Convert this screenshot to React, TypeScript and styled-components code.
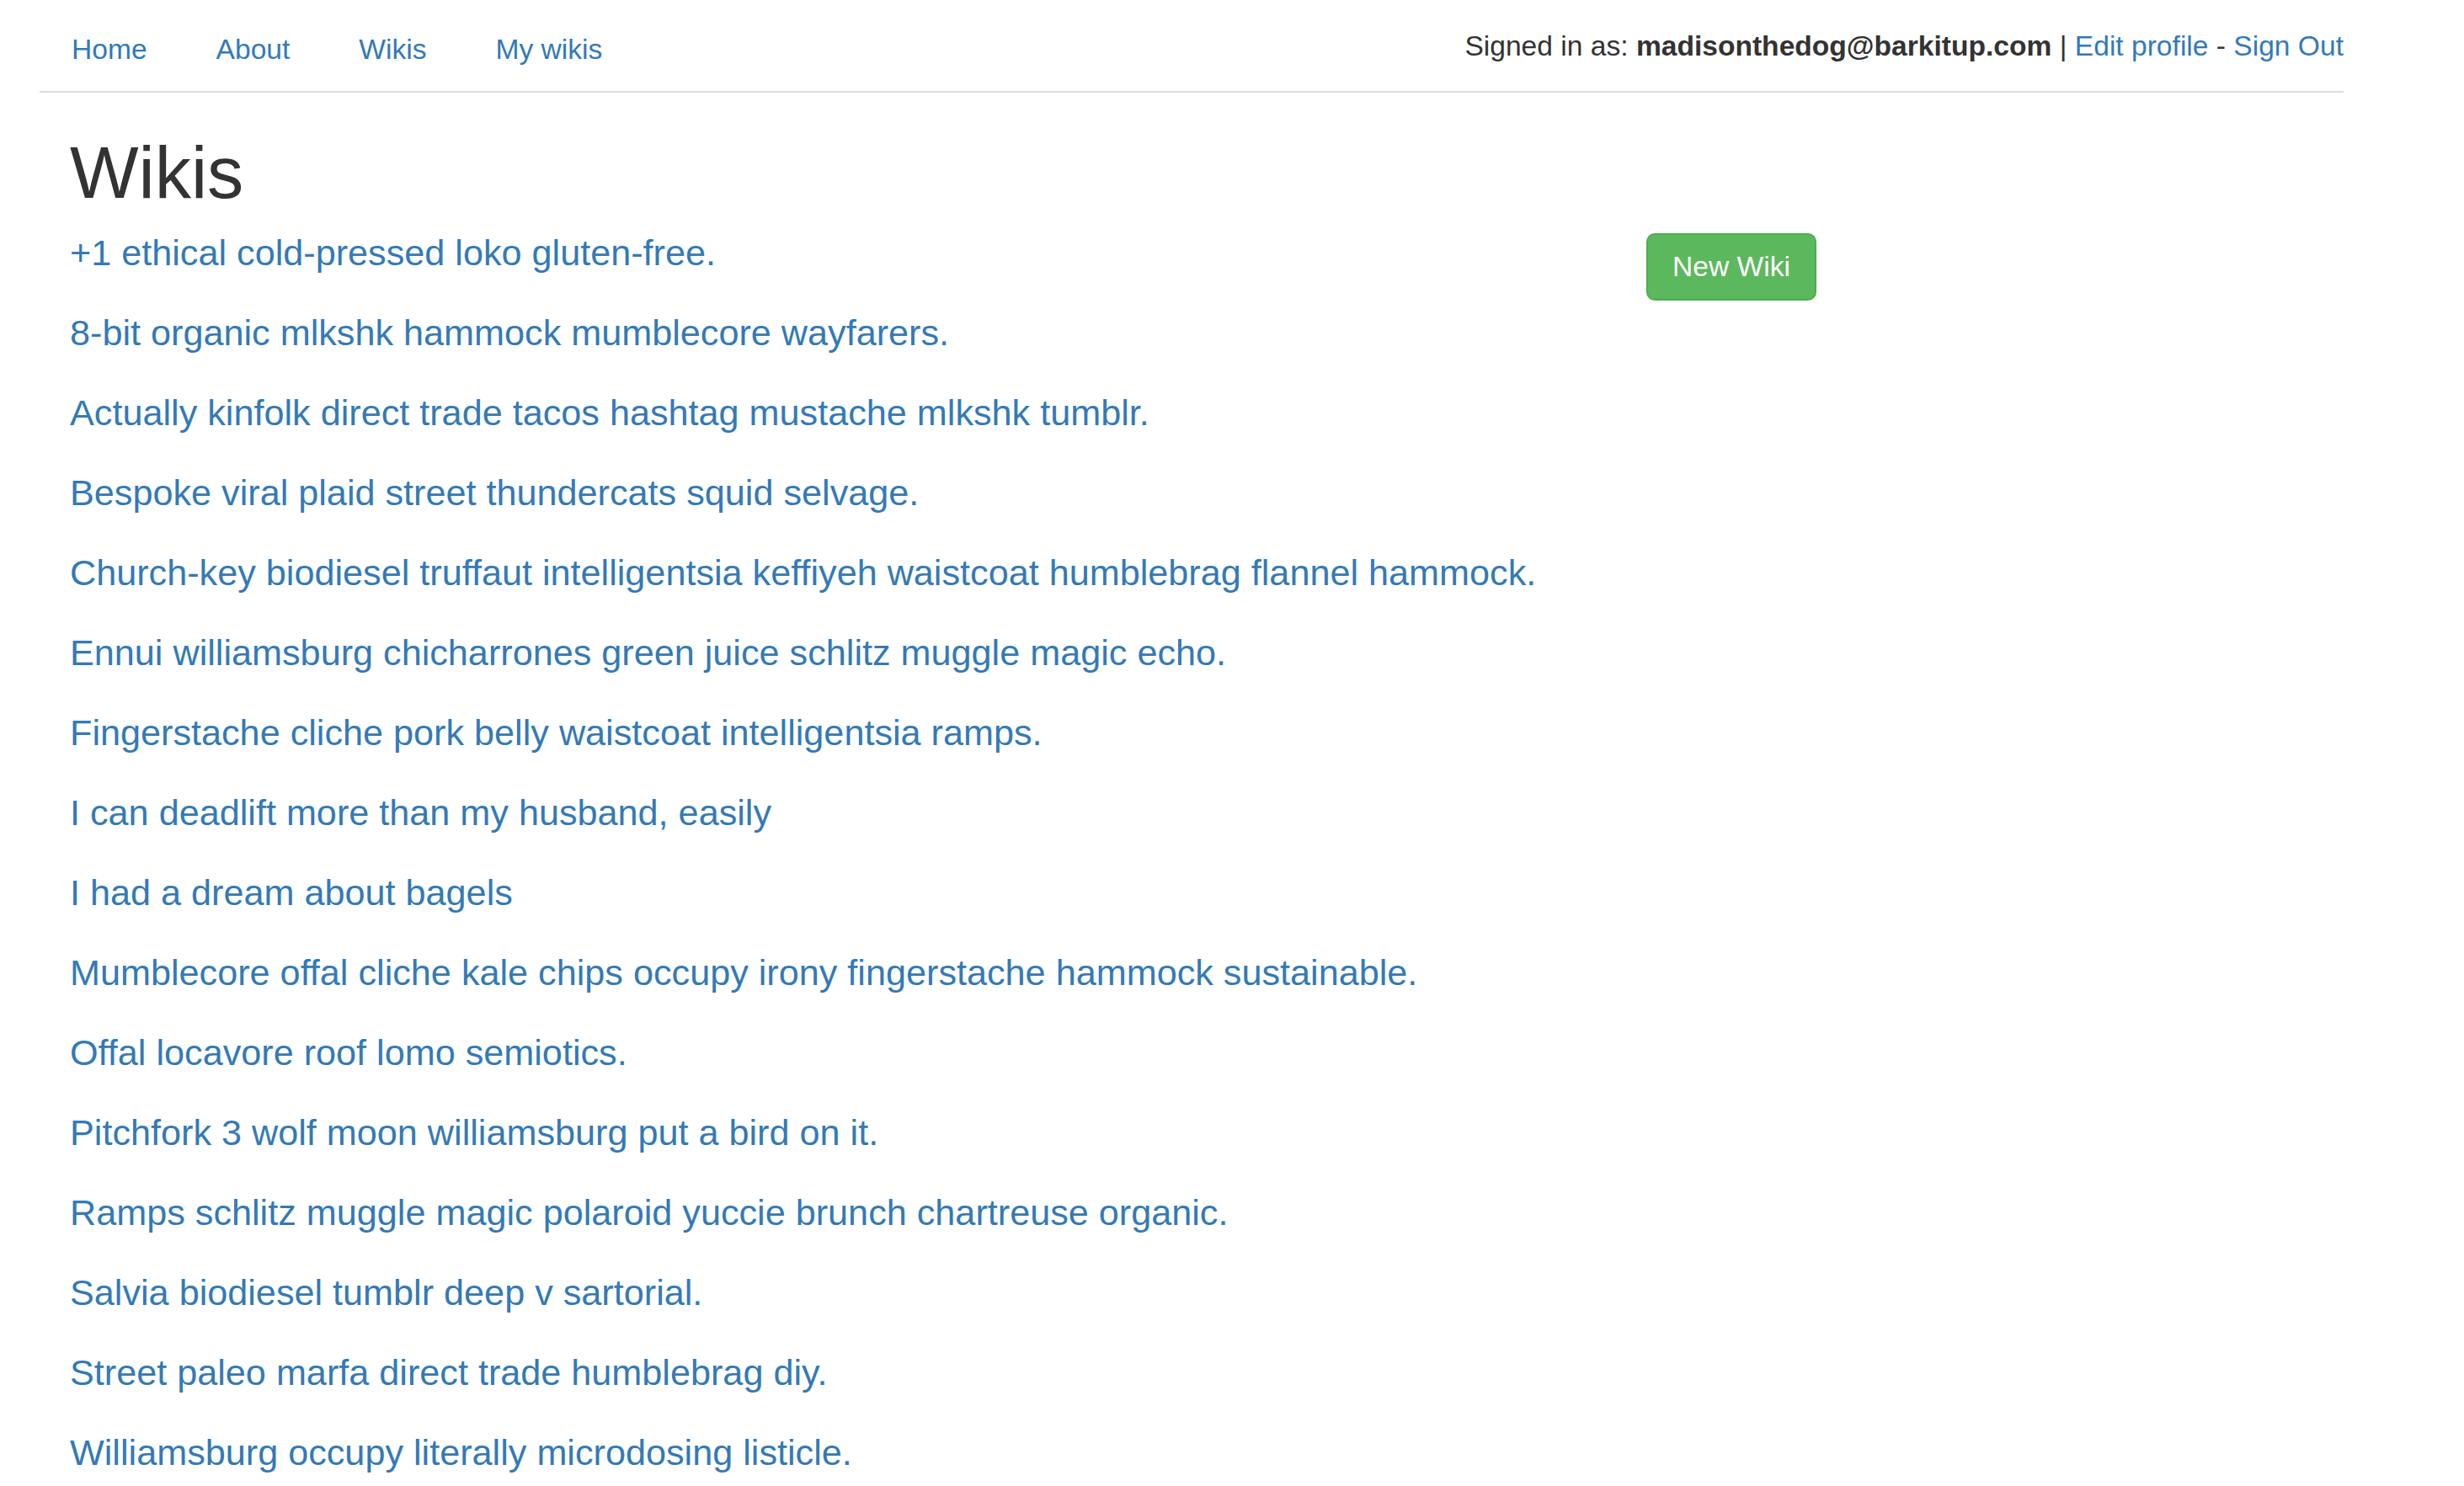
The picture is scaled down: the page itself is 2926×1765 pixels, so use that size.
import React from "react";
import styled, { createGlobalStyle } from "styled-components";

const GlobalStyle = createGlobalStyle`
  html, body {
    margin: 0;
    padding: 0;
    background: #ffffff;
  }
  body {
    font-family: "Liberation Sans", Arial, Helvetica, sans-serif;
    color: #333333;
  }
  a {
    color: #337ab7;
    text-decoration: none;
  }
`;

const Container = styled.div`
  margin-left: 47px;
  width: 2736px;
`;

const Header = styled.header`
  display: flex;
  justify-content: space-between;
  align-items: flex-start;
  height: 108px;
  border-bottom: 2px solid #dddddd;
`;

const NavList = styled.nav`
  display: flex;
  gap: 82px;
  padding: 35px 0 0 38px;
  font-size: 33.6px;
  line-height: 48px;
`;

const NavLink = styled.a`
  color: #337ab7;
`;

const UserInfo = styled.div`
  padding-top: 31px;
  font-size: 33.6px;
  line-height: 48px;
  color: #333333;
  white-space: nowrap;
`;

const Email = styled.strong`
  font-weight: 700;
`;

const Main = styled.main`
  padding: 0 37px 0 36px;
`;

const Title = styled.h1`
  margin: 48px 0 0;
  font-size: 86.4px;
  line-height: 95px;
  font-weight: 400;
  color: #333333;
`;

const Body = styled.div`
  display: grid;
  grid-template-columns: 1872px auto;
  align-items: start;
`;

const WikiList = styled.div`
  display: flex;
  flex-direction: column;
`;

const WikiItem = styled.a`
  display: block;
  font-size: 43.2px;
  line-height: 95px;
  color: #337ab7;
  white-space: nowrap;
`;

const Side = styled.div`
  padding-top: 24px;
`;

const SuccessButton = styled.a`
  display: inline-block;
  box-sizing: border-box;
  padding: 0 29px;
  font-size: 33.6px;
  line-height: 76px;
  color: #ffffff;
  background: #5cb85c;
  border: 2px solid #4cae4c;
  border-radius: 10px;
  white-space: nowrap;
`;

const wikis = [
  "+1 ethical cold-pressed loko gluten-free.",
  "8-bit organic mlkshk hammock mumblecore wayfarers.",
  "Actually kinfolk direct trade tacos hashtag mustache mlkshk tumblr.",
  "Bespoke viral plaid street thundercats squid selvage.",
  "Church-key biodiesel truffaut intelligentsia keffiyeh waistcoat humblebrag flannel hammock.",
  "Ennui williamsburg chicharrones green juice schlitz muggle magic echo.",
  "Fingerstache cliche pork belly waistcoat intelligentsia ramps.",
  "I can deadlift more than my husband, easily",
  "I had a dream about bagels",
  "Mumblecore offal cliche kale chips occupy irony fingerstache hammock sustainable.",
  "Offal locavore roof lomo semiotics.",
  "Pitchfork 3 wolf moon williamsburg put a bird on it.",
  "Ramps schlitz muggle magic polaroid yuccie brunch chartreuse organic.",
  "Salvia biodiesel tumblr deep v sartorial.",
  "Street paleo marfa direct trade humblebrag diy.",
  "Williamsburg occupy literally microdosing listicle.",
];

export default function App() {
  return (
    <>
      <GlobalStyle />
      <Container>
        <Header>
          <NavList>
            <NavLink href="#">Home</NavLink>
            <NavLink href="#">About</NavLink>
            <NavLink href="#">Wikis</NavLink>
            <NavLink href="#">My wikis</NavLink>
          </NavList>
          <UserInfo>
            Signed in as: <Email>madisonthedog@barkitup.com</Email> |{" "}
            <a href="#">Edit profile</a> - <a href="#">Sign Out</a>
          </UserInfo>
        </Header>
        <Main>
          <Title>Wikis</Title>
          <Body>
            <WikiList>
              {wikis.map((w) => (
                <WikiItem key={w} href="#">
                  {w}
                </WikiItem>
              ))}
            </WikiList>
            <Side>
              <SuccessButton href="#">New Wiki</SuccessButton>
            </Side>
          </Body>
        </Main>
      </Container>
    </>
  );
}
